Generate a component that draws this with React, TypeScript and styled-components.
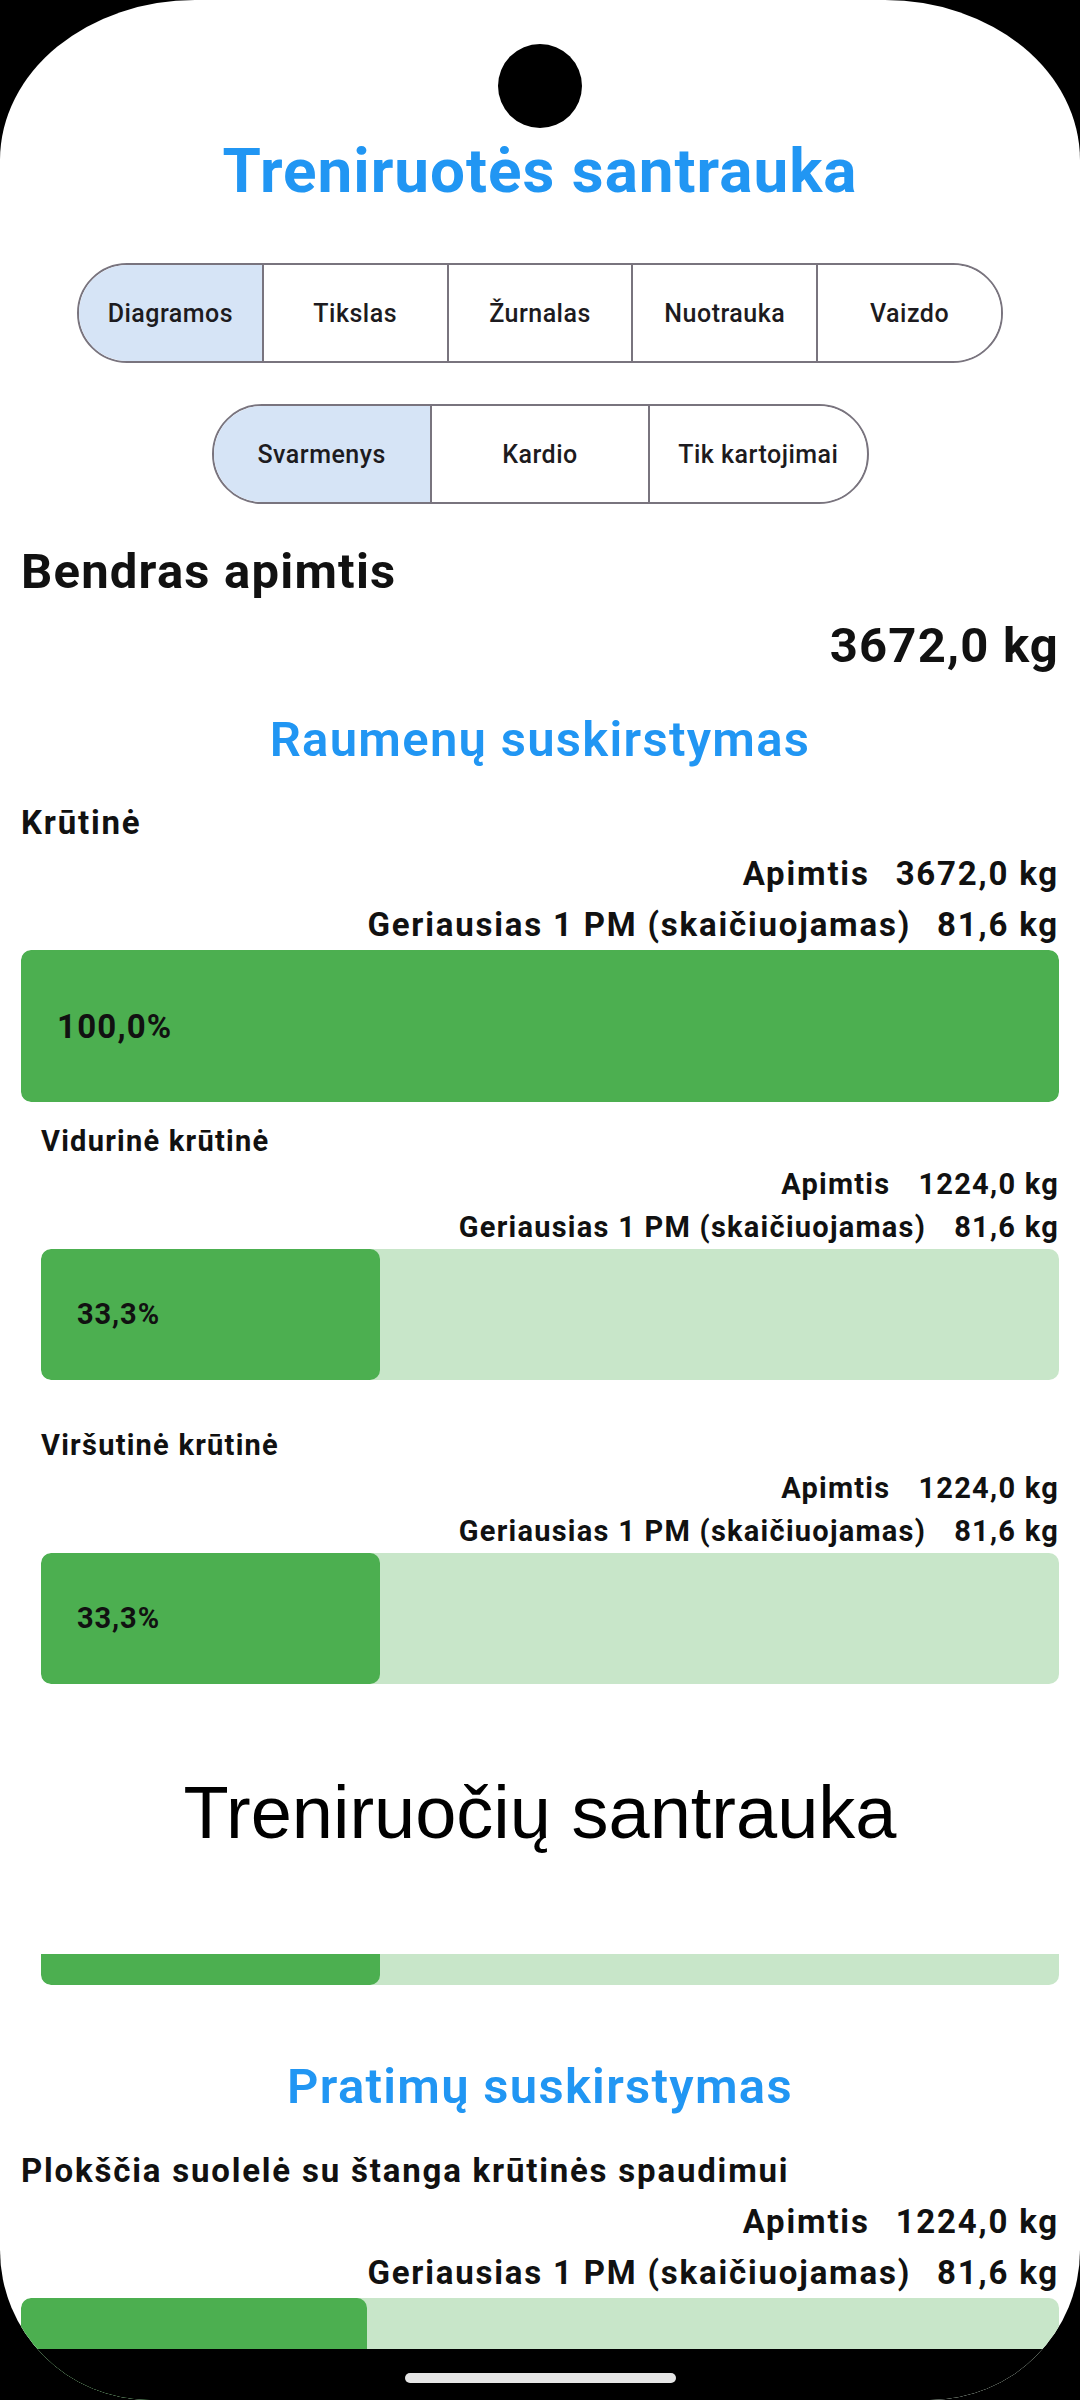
import React from "react"
import styled, { createGlobalStyle } from "styled-components"

const GlobalStyle = createGlobalStyle`
    html, body {
        margin: 0;
        padding: 0;
        background: #000;
    }
    * { box-sizing: border-box; }
`

const Screen = styled.div`
    position: relative;
    width: 1080px;
    height: 2400px;
    overflow: hidden;
    background: #fff;
    border-top-left-radius: 195px 160px;
    border-top-right-radius: 195px 160px;
    border-bottom-left-radius: 150px;
    border-bottom-right-radius: 150px;
    font-family: Roboto, "Noto Sans", sans-serif;
    color: #111;
`

const Camera = styled.div`
    position: absolute;
    top: 44px;
    left: 498px;
    width: 84px;
    height: 84px;
    border-radius: 50%;
    background: #000;
    z-index: 5;
`

const NavBar = styled.div`
    position: absolute;
    left: 0;
    right: 0;
    bottom: 0;
    height: 51px;
    background: #000;
    display: flex;
    justify-content: center;
    padding-top: 24px;
    z-index: 5;
`

const HomePill = styled.div`
    width: 271px;
    height: 10px;
    border-radius: 5px;
    background: #e6e6e6;
`

const Title = styled.h1`
    margin: 0;
    padding-top: 135px;
    font-size: 62px;
    line-height: 72px;
    font-weight: 700;
    letter-spacing: 1px;
    color: #2196f3;
    text-align: center;
`

const Segmented = styled.div<{ $width: number; $top: number }>`
    display: flex;
    width: ${({ $width }) => $width}px;
    height: 100px;
    margin: ${({ $top }) => $top}px auto 0;
    border: 2px solid #79747e;
    border-radius: 50px;
    overflow: hidden;
`

const Segment = styled.div<{ $active?: boolean }>`
    flex: 1;
    display: flex;
    align-items: center;
    justify-content: center;
    background: ${({ $active }) => ($active ? "#d6e4f6" : "#fff")};
    font-size: 25px;
    font-weight: 500;
    letter-spacing: 0.5px;
    color: #1d1b20;

    & + & { border-left: 2px solid #79747e; }
`

const Body = styled.div`
    padding: 0 21px;
`

const TotalLabel = styled.div`
    margin-top: 40px;
    font-size: 49px;
    line-height: 56px;
    font-weight: 700;
    letter-spacing: 1.2px;
`

const TotalValue = styled.div`
    margin-top: 18px;
    font-size: 49px;
    line-height: 56px;
    font-weight: 700;
    letter-spacing: 1.2px;
    text-align: right;
`

const SectionTitle = styled.h2<{ $top: number }>`
    margin: ${({ $top }) => $top}px 0 0;
    font-size: 49px;
    line-height: 56px;
    font-weight: 600;
    letter-spacing: 1.3px;
    color: #2196f3;
    text-align: center;
`

const Item = styled.div<{ $sub?: boolean; $top: number }>`
    margin-top: ${({ $top }) => $top}px;
    padding-left: ${({ $sub }) => ($sub ? 20 : 0)}px;
    font-size: ${({ $sub }) => ($sub ? 29 : 33)}px;
    line-height: ${({ $sub }) => ($sub ? 43 : 51)}px;
    letter-spacing: ${({ $sub }) => ($sub ? 1.25 : 1.8)}px;
    font-weight: 700;
`

const ItemName = styled.div``

const StatRow = styled.div<{ $sub?: boolean }>`
    display: flex;
    justify-content: flex-end;
    gap: ${({ $sub }) => ($sub ? 28 : 26)}px;
`

const Bar = styled.div<{ $height: number }>`
    display: flex;
    height: ${({ $height }) => $height}px;
    border-radius: 10px;
    overflow: hidden;
    background: #c8e6c9;
`

const BarFill = styled.div<{ $sub?: boolean }>`
    display: flex;
    align-items: center;
    padding-left: 36px;
    background: #4caf50;
    border-radius: 10px;
    color: #111;
    letter-spacing: ${({ $sub }) => ($sub ? 0.9 : 1.2)}px;
`

const StubBar = styled.div`
    display: flex;
    height: 31px;
    margin: 99px 0 0 20px;
    border-radius: 0 0 10px 10px;
    overflow: hidden;
    background: #c8e6c9;
`

const StubFill = styled.div`
    background: #4caf50;
    border-radius: 0 0 10px 10px;
`

const Overlay = styled.div`
    margin-top: 86px;
    font-family: "Liberation Sans", Arial, sans-serif;
    font-size: 74px;
    line-height: 85px;
    font-weight: 400;
    color: #000;
    text-align: center;
`

type Entry = {
    name: string
    volume: string
    best: string
    pct: number
    sub?: boolean
    top: number
    height: number
    label?: boolean
}

const muscles: Entry[] = [
    { name: "Krūtinė", volume: "3672,0 kg", best: "81,6 kg", pct: 100, top: 29, height: 152, label: true },
    { name: "Vidurinė krūtinė", volume: "1224,0 kg", best: "81,6 kg", pct: 33.3, sub: true, top: 18, height: 131, label: true },
    { name: "Viršutinė krūtinė", volume: "1224,0 kg", best: "81,6 kg", pct: 33.3, sub: true, top: 44, height: 131, label: true },
]

const exercises: Entry[] = [
    { name: "Plokščia suolelė su štanga krūtinės spaudimui", volume: "1224,0 kg", best: "81,6 kg", pct: 33.3, top: 30, height: 152 },
]

const fmt = (n: number) => n.toFixed(1).replace(".", ",") + "%"

function BreakdownItem({ e }: { e: Entry }) {
    return (
        <Item $sub={e.sub} $top={e.top}>
            <ItemName>{e.name}</ItemName>
            <StatRow $sub={e.sub}>
                <span>Apimtis</span>
                <span>{e.volume}</span>
            </StatRow>
            <StatRow $sub={e.sub}>
                <span>Geriausias 1 PM (skaičiuojamas)</span>
                <span>{e.best}</span>
            </StatRow>
            <Bar $height={e.height}>
                <BarFill $sub={e.sub} style={{ width: `${e.pct}%` }}>
                    {e.label ? fmt(e.pct) : null}
                </BarFill>
            </Bar>
        </Item>
    )
}

export default function App() {
    return (
        <>
            <GlobalStyle />
            <Screen>
                <Camera />
                <Title>Treniruotės santrauka</Title>

                <Segmented $width={926} $top={56}>
                    <Segment $active>Diagramos</Segment>
                    <Segment>Tikslas</Segment>
                    <Segment>Žurnalas</Segment>
                    <Segment>Nuotrauka</Segment>
                    <Segment>Vaizdo</Segment>
                </Segmented>

                <Segmented $width={657} $top={41}>
                    <Segment $active>Svarmenys</Segment>
                    <Segment>Kardio</Segment>
                    <Segment>Tik kartojimai</Segment>
                </Segmented>

                <Body>
                    <TotalLabel>Bendras apimtis</TotalLabel>
                    <TotalValue>3672,0 kg</TotalValue>

                    <SectionTitle $top={38}>Raumenų suskirstymas</SectionTitle>
                    {muscles.map(m => <BreakdownItem key={m.name} e={m} />)}

                    <Overlay>Treniruočių santrauka</Overlay>
                    <StubBar>
                        <StubFill style={{ width: "33.3%" }} />
                    </StubBar>

                    <SectionTitle $top={74}>Pratimų suskirstymas</SectionTitle>
                    {exercises.map(x => <BreakdownItem key={x.name} e={x} />)}
                </Body>

                <NavBar>
                    <HomePill />
                </NavBar>
            </Screen>
        </>
    )
}
